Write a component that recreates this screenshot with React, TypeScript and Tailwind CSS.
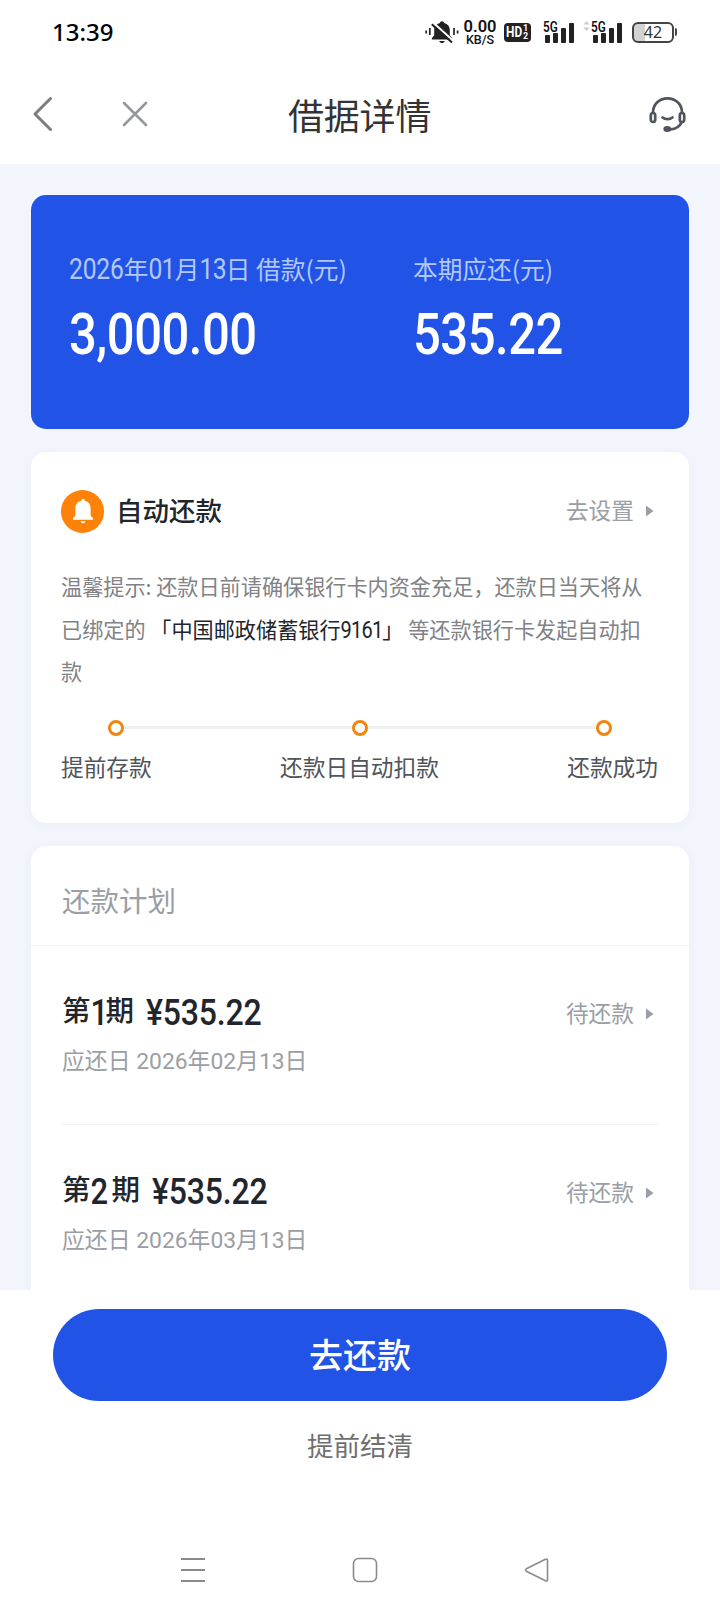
import { type ReactNode } from 'react';

interface Installment {
  index: number;
  amount: string;
  dueDate: string;
}

const installments: Installment[] = [
  { index: 1, amount: '535.22', dueDate: '2026年02月13日' },
  { index: 2, amount: '535.22', dueDate: '2026年03月13日' },
];

// Tall narrow figures, used for dates and amounts
function Num({ children, className = '' }: { children: ReactNode; className?: string }) {
  return (
    <span className={`inline-block origin-[50%_85%] scale-y-[1.18] font-['Roboto'] leading-none ${className}`}>{children}</span>
  );
}

function Signal() {
  return (
    <div className="relative h-[21px] w-8">
      <span className="absolute -top-[3px] left-0 origin-left scale-x-[0.84] font-['Roboto'] text-[14px] leading-4 font-semibold">5G</span>
      <svg className="absolute inset-0" width="32" height="21" viewBox="0 0 32 21" fill="#222">
        <rect x="2" y="13" width="5" height="8" rx="1" />
        <rect x="10" y="11" width="5" height="10" rx="1" />
        <rect x="18" y="6" width="5" height="15" rx="1" />
        <rect x="26" y="1" width="5" height="20" rx="1" />
      </svg>
    </div>
  );
}

function StatusBar() {
  return (
    <div className="flex h-16 items-center pr-[43px] pl-[52px] font-['Noto_Sans'] text-[#111]">
      <span className="text-[24px] leading-none font-medium text-black">13:39</span>
      <div className="ml-auto flex items-center">
        <svg width="34" height="24" viewBox="0 0 34 24" fill="#222">
          <path d="M17 1.2c1.2 0 2 .8 2.1 1.8 3.600.9 5.700 3.600 5.700 7.200v5l2.400 3v1.400H6.800v-1.400l2.400-3v-5c0-3.600 2.100-6.300 5.700-7.200.1-1 .9-1.800 2.100-1.800z" />
          <path d="M14.300 21h5.400c-.4 1.400-1.400 2-2.700 2s-2.300-.6-2.700-2z" />
          <path d="M8 2.500L29 21.500" stroke="#fff" strokeWidth="2.200" />
          <path d="M6.800 4.300L27 22.500" stroke="#222" strokeWidth="2" />
          <path d="M1.200 10.500v3M4.800 8v7M29 8v7M32.600 10.500v3" stroke="#222" strokeWidth="1.700" />
        </svg>
        <div className="ml-1 flex h-[25px] w-[34px] flex-col items-center justify-between font-['Roboto']">
          <span className="text-[16.500px] leading-[13px] font-semibold">0.00</span>
          <span className="text-[12.500px] leading-[11px] font-medium">KB/S</span>
        </div>
        <div className="ml-[7px] flex h-[19px] w-[27px] items-center rounded-[4px] bg-[#222] pl-[2px] text-white">
          <span className="w-[17px] origin-left scale-x-[0.85] font-['Roboto'] text-[14px] leading-none font-bold">HD</span>
          <span className="flex flex-col font-['Roboto'] text-[9px] leading-[8px] font-bold">
            <span>1</span>
            <span>2</span>
          </span>
        </div>
        <div className="ml-3">
          <Signal />
        </div>
        <svg className="mb-3 ml-[8px]" width="7" height="10" viewBox="0 0 7 10" fill="#ccc">
          <path d="M3.500 0l3 3.500h-6zM3.500 10l3-3.500h-6z" />
        </svg>
        <div className="ml-px">
          <Signal />
        </div>
        <div className="ml-[9px] flex h-[21px] w-[42px] items-center justify-center rounded-[6px] border-2 border-[#444] bg-linear-to-r from-[#d2d2d2] from-30% to-white to-30% text-[16px] leading-none text-[#333]">
          42
        </div>
        <span className="ml-px h-2 w-[2px] rounded-r bg-[#444]" />
      </div>
    </div>
  );
}

function Header() {
  return (
    <header className="flex h-[100px] items-center pr-[34px] pl-[32px]">
      <svg width="22" height="36" viewBox="0 0 22 36" fill="none" stroke="#7b7d80" strokeWidth="3" strokeLinecap="round" strokeLinejoin="round">
        <path d="M18.500 2.500L3 18l15.500 15.500" />
      </svg>
      <svg className="ml-[68px]" width="26" height="26" viewBox="0 0 26 26" fill="none" stroke="#94989d" strokeWidth="2.600" strokeLinecap="round">
        <path d="M2 2l22 22M24 2L2 24" />
      </svg>
      <h1 className="ml-[140px] text-[36px] leading-none font-normal tracking-[-0.200px] text-[#333]">借据详情</h1>
      <svg className="ml-auto" width="37" height="37" viewBox="0 0 37 37" fill="none" stroke="#50555d" strokeWidth="2.700" strokeLinecap="round">
        <path d="M4 16.500C4 8 10.500 2.300 18.500 2.300S33 8 33 16.500" />
        <rect x="1.800" y="17" width="4.400" height="9" rx="2.200" />
        <rect x="30.800" y="17" width="4.400" height="9" rx="2.200" />
        <path d="M13.500 21.500c2.800 2.200 7.200 2.200 10 0" />
        <path d="M32.500 26.500c-1.800 4-5.500 6.500-11 7" />
        <ellipse cx="18.300" cy="33" rx="3" ry="2" fill="#50555d" strokeWidth="2" />
      </svg>
    </header>
  );
}

function ActionLink({ children }: { children: ReactNode }) {
  return (
    <div className="flex items-center text-[22.700px] leading-none text-[#9a9ea5]">
      <span className="-mt-[2px]">{children}</span>
      <svg className="mr-[5px] ml-[12px]" width="8" height="12" viewBox="0 0 8 12" fill="#9a9ea5">
        <path d="M0 .5l7.500 5.500L0 11.500z" />
      </svg>
    </div>
  );
}

function SummaryItem({ label, amount }: { label: ReactNode; amount: string }) {
  return (
    <div>
      <p className="h-[26px] text-[24.700px] leading-[26px] whitespace-nowrap text-[#b3c8fa]">{label}</p>
      <p className="mt-[27px] flex h-[58px] items-center text-white">
        <Num className="text-[49px] font-medium tracking-[-0.500px]">{amount}</Num>
      </p>
    </div>
  );
}

function SummaryCard() {
  return (
    <section className="grid h-[234px] grid-cols-[344px_1fr] rounded-[15px] bg-[#2154e6] pt-[60px] pl-[38px]">
      <SummaryItem
        label={
          <>
            <Num className="tracking-[-0.200px]">2026</Num>年<Num className="tracking-[-0.700px]">01</Num>月
            <Num className="tracking-[-0.700px]">13</Num>日 借款(元)
          </>
        }
        amount="3,000.00"
      />
      <SummaryItem label="本期应还(元)" amount="535.22" />
    </section>
  );
}

function Steps() {
  return (
    <div className="mt-[27px]">
      <div className="mx-[47px] flex items-center">
        <span className="size-4 rounded-full border-[3px] border-[#f08510]" />
        <span className="h-[3px] flex-1 bg-[#f0f1f3]" />
        <span className="size-4 rounded-full border-[3px] border-[#f08510]" />
        <span className="h-[3px] flex-1 bg-[#f0f1f3]" />
        <span className="size-4 rounded-full border-[3px] border-[#f08510]" />
      </div>
      <div className="mt-[19px] flex justify-between text-[22.700px] leading-6 text-[#50545b]">
        <span>提前存款</span>
        <span>还款日自动扣款</span>
        <span className="pr-px">还款成功</span>
      </div>
    </div>
  );
}

function AutoRepayCard() {
  return (
    <section className="mt-[23px] h-[371px] rounded-[15px] bg-white px-[30px] pt-[38px] shadow-[0_2px_12px_rgba(60,80,120,0.04)]">
      <div className="flex items-center">
        <span className="flex size-[43px] items-center justify-center rounded-full bg-[#ff8208]">
          <svg width="22" height="25" viewBox="0 0 22 25" fill="#fff">
            <path d="M11 0c1 0 1.700.7 1.800 1.700 3.700.8 5.800 3.700 5.800 7.400v6.700c0 1.300 1 2.200 2.400 3v1.900H1v-1.900c1.400-.8 2.400-1.700 2.400-3V9.100c0-3.700 2.100-6.600 5.800-7.400C9.300.7 10 0 11 0z" />
            <path d="M8.500 22.300h5c-.4 1.200-1.300 1.900-2.500 1.900s-2.100-.7-2.500-1.900z" />
          </svg>
        </span>
        <h2 className="-mt-[2px] ml-3 text-[26.500px] leading-none font-medium text-[#22252b]">自动还款</h2>
        <div className="ml-auto">
          <ActionLink>去设置</ActionLink>
        </div>
      </div>
      <p className="mt-[32px] text-[21.150px] leading-[42.500px] whitespace-nowrap text-[#808285]">
        温馨提示: 还款日前请确保银行卡内资金充足，还款日当天将从
        <br />
        已绑定的 <span className="text-[#22252b]">「中国邮政储蓄银行<Num className="text-[20px] tracking-[-0.800px]">9161</Num>」</span> 等还款银行卡发起自动扣
        <br />款
      </p>
      <Steps />
    </section>
  );
}

function InstallmentRow({ index, amount, dueDate }: Installment) {
  return (
    <li className="mx-[30px] flex h-[179px] justify-between border-b border-[#f1f2f4] pt-[48px]">
      <div className="pl-px">
        <p className="flex h-[34px] items-center text-[28.500px] leading-[34px] font-medium text-[#22252b]">
          <span className="-mt-[4px]">第</span>
          <Num className={`mt-[6px] flex justify-center text-[31px] font-medium ${index === 1 ? 'w-[15px]' : 'w-[21px]'}`}>{index}</Num>
          <span className="-mt-[4px]">期</span>
          <Num className="mt-[6px] ml-[12px] text-[32px] font-medium tracking-[-0.200px]">¥{amount}</Num>
        </p>
        <p className="mt-[18px] font-['Roboto','Noto_Sans_CJK_SC',sans-serif] text-[22.850px] leading-8 text-[#9a9ea5]">
          应还日 {dueDate}
        </p>
      </div>
      <div className="pt-[10px]">
        <ActionLink>待还款</ActionLink>
      </div>
    </li>
  );
}

function RepaymentPlan() {
  return (
    <section className="mt-[23px] rounded-t-[15px] bg-white shadow-[0_2px_12px_rgba(60,80,120,0.04)]">
      <h2 className="flex h-[100px] items-center border-b border-[#f0f1f3] pt-[10px] pl-[31px] text-[28.500px] leading-none font-normal text-[#9a9ea5]">
        还款计划
      </h2>
      <ul>
        {installments.map((item) => (
          <InstallmentRow key={item.index} {...item} />
        ))}
      </ul>
    </section>
  );
}

function NavBar() {
  return (
    <nav className="mt-[93px] flex items-center justify-between pr-[170px] pl-[180px]">
      <svg width="26" height="26" viewBox="0 0 26 26" stroke="#8a8a8a" strokeWidth="1.800">
        <path d="M1 2h24M1 13h24M1 24h24" />
      </svg>
      <svg width="26" height="26" viewBox="0 0 26 26" fill="none" stroke="#8a8a8a" strokeWidth="1.600">
        <rect x="1.500" y="1.500" width="23" height="23" rx="5" />
      </svg>
      <svg width="26" height="26" viewBox="0 0 26 26" fill="none" stroke="#8a8a8a" strokeWidth="1.600" strokeLinejoin="round">
        <path d="M21.500 2.200L2.300 11.800q-1.600 1.200 0 2.400L21.500 23.800q2 .8 2-1.300V3.500q0-2.100-2-1.300z" />
      </svg>
    </nav>
  );
}

export default function App() {
  return (
    <div className="flex h-[1612px] w-[720px] flex-col overflow-hidden bg-white font-['Noto_Sans_CJK_SC',sans-serif]">
      <StatusBar />
      <Header />
      <main className="h-[1126px] shrink-0 overflow-hidden bg-[#f2f5fc] px-[31px] pt-[31px]">
        <SummaryCard />
        <AutoRepayCard />
        <RepaymentPlan />
      </main>
      <footer className="flex-1 pt-[19px]">
        <button className="mx-auto flex h-[92px] w-[614px] items-center justify-center rounded-full bg-[#2154e6] pb-[4px] text-[34px] font-medium text-white">
          去还款
        </button>
        <button className="mx-auto mt-[25px] block text-[26.500px] leading-[38px] text-[#6f6f6f]">提前结清</button>
        <NavBar />
      </footer>
    </div>
  );
}
